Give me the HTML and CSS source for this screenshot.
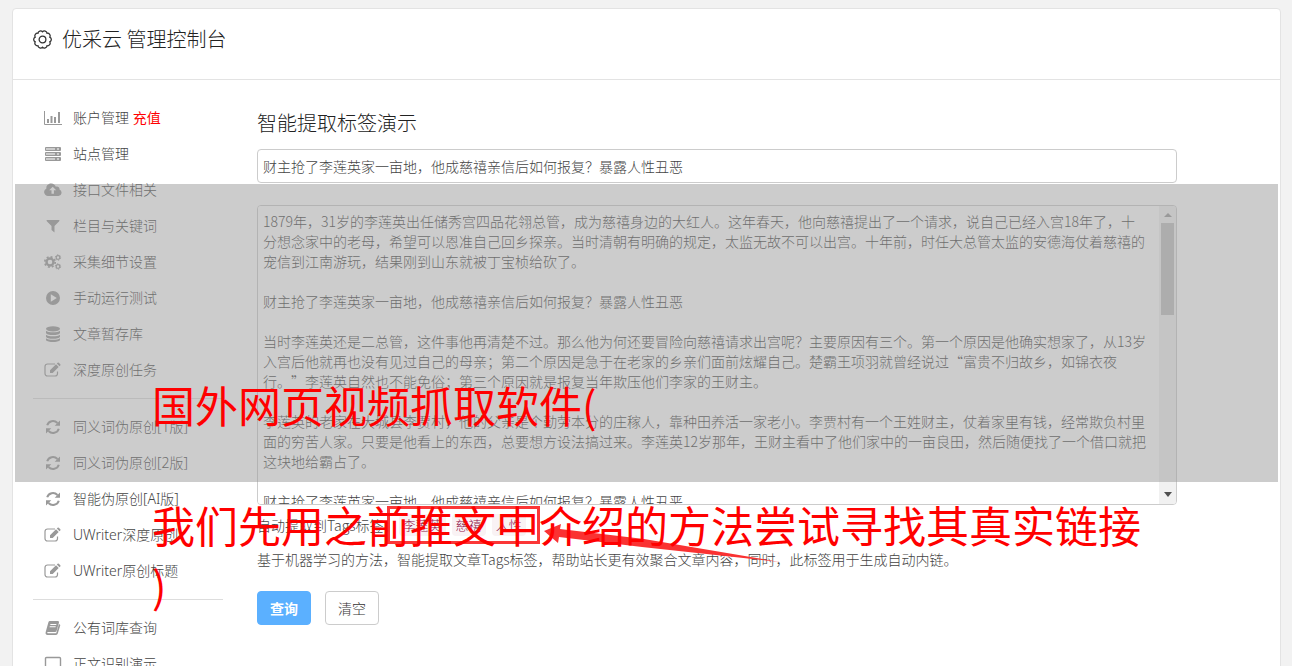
FILE: index.html
```html
<!DOCTYPE html>
<html lang="zh-CN">
<head>
<meta charset="utf-8">
<title>优采云 管理控制台</title>
<link rel="stylesheet" href="styles.css">
</head>
<body>
<svg class="defs" aria-hidden="true">
  <symbol id="i-chart" viewBox="0 0 18 16"><path d="M.5 1v13.500H18" fill="none" stroke="currentColor"/><path d="M3 9h2v4H3zM6.500 6h2v7h-2zM10 7h2v6h-2zM14 2h2v11h-2z"/></symbol>
  <symbol id="i-server" viewBox="0 0 18 16"><path fill="none" stroke="currentColor" d="M1.500 1.500h15v3h-15zM1.500 6.500h15v3h-15zM1.500 11.500h15v3h-15z"/><path opacity=".5" d="M2 2h13v2H2zM2 7h13v2H2zM2 12h13v2H2z"/><path d="M11 2h2v2h-2zM15 2h1v2h-1zM11 7h2v2h-2zM15 7h1v2h-1zM11 12h2v2h-2zM15 12h1v2h-1z"/></symbol>
  <symbol id="i-cloud" viewBox="0 0 18 16"><path fill-rule="evenodd" d="M4 14a4 4 0 0 1-1.600-7.600C2 3.500 4.500 1.500 7.200 1.500c2.300 0 4 1.300 4.700 3.200 2-.8 4 .8 3.600 2.800A3.400 3.400 0 0 1 14.500 14zM8.700 4.700 5.200 8.200h2.300v3.600h2.400V8.200h2.300z"/></symbol>
  <symbol id="i-filter" viewBox="0 0 18 16"><path d="M2.500 2h13l-.3 1.200-4.700 4.700v6.600l-3-2.400V7.900L2.800 3.200z"/></symbol>
  <symbol id="i-cogs" viewBox="0 0 18 16"><g fill="none" stroke="currentColor"><circle cx="6" cy="8" r="3.500" stroke-width="2.400"/><circle cx="6" cy="8" r="5.200" stroke-width="1.700" stroke-dasharray="2 2.080"/><circle cx="14" cy="3.500" r="1.800" stroke-width="1.200"/><circle cx="14" cy="3.500" r="2.700" stroke-dasharray="1.400 1.427"/><circle cx="14" cy="12.500" r="1.800" stroke-width="1.200"/><circle cx="14" cy="12.500" r="2.700" stroke-dasharray="1.400 1.427"/></g></symbol>
  <symbol id="i-play" viewBox="0 0 18 16"><path fill-rule="evenodd" d="M9 1a7 7 0 1 1 0 14A7 7 0 0 1 9 1zM6.800 4.300v7.400L12.800 8z"/></symbol>
  <symbol id="i-db" viewBox="0 0 18 16"><ellipse cx="9" cy="2.800" rx="7" ry="2.600"/><path d="M2 4.700c2.500 2 11.500 2 14 0v2c0 3.100-14 3.100-14 0zM2 8.700c2.500 2 11.500 2 14 0v1.800c0 3.100-14 3.100-14 0zM2 12.300c2.500 2 11.500 2 14 0v1.400c0 3.100-14 3.100-14 0z"/></symbol>
  <symbol id="i-edit" viewBox="0 0 18 16"><path d="M11 2H3.500A2.500 2.500 0 0 0 1 4.500v7A2.500 2.500 0 0 0 3.500 14h7.500a2.500 2.500 0 0 0 2.500-2.500V9.500" fill="none" stroke="currentColor" stroke-width="1.200"/><path d="m6 8.300 6-6 2.700 2.700-6 6H6zM12.800 1.500l.8-.8q.6-.5 1.200 0L16.300 2.200q.5.600 0 1.200l-.8.8z"/></symbol>
  <symbol id="i-sync" viewBox="0 0 18 16"><path d="M3.200 6.300C4.600 1.800 10.200.8 13.500 4M14.800 9.700C13.400 14.200 7.800 15.200 4.500 12" fill="none" stroke="currentColor" stroke-width="2"/><path d="M16 1.500v5.300h-5.300zM2 14.500V9.200h5.300z"/></symbol>
  <symbol id="i-book" viewBox="0 0 18 16"><path fill-rule="evenodd" d="M5.800 1h8.200q1.300.2 1 1.500l-2.400 8.200Q12.200 12 11 12H3.500q-.7.500.2 1.200h8.500l2.600-8.700q1.200-.5 1.500.7l-2.500 8.300q-.4 1.300-1.800 1.500H3.500Q1 14.700 1.700 12L4.400 2.300Q4.800 1.100 5.800 1zM6.500 4l-.3 1h6l.3-1zM5.800 6.300l-.3 1h6l.3-1z"/></symbol>
  <symbol id="i-laptop" viewBox="0 0 18 16"><path d="M1.500 2.500q0-1 1-1h13q1 0 1 1v8q0 1-1 1h-13q-1 0-1-1zM0 14h18" fill="none" stroke="currentColor" stroke-width="1.400"/></symbol>
</svg>

<div class="card">
  <header class="head">
    <svg class="gear" viewBox="0 0 18 18" aria-hidden="true"><path d="M15.940 6.740A2.500 2.500 0 0 1 15.940 11.260 2.500 2.500 0 0 1 13.290 14.910 2.500 2.500 0 0 1 9 16.300 2.500 2.500 0 0 1 4.710 14.910 2.500 2.500 0 0 1 2.060 11.260 2.500 2.500 0 0 1 2.060 6.740 2.500 2.500 0 0 1 4.710 3.090 2.500 2.500 0 0 1 9 1.700 2.500 2.500 0 0 1 13.290 3.090 2.500 2.500 0 0 1 15.940 6.740z" fill="none" stroke="currentColor" stroke-width="1.200"/><circle cx="9" cy="9" r="3.200" fill="none" stroke="currentColor" stroke-width="1.200"/></svg>
    <h1>优采云 管理控制台</h1>
  </header>
  <div class="body">
    <nav class="side">
      <div class="item"><svg><use href="#i-chart"/></svg><span><a href="#">账户管理</a> <a class="pay" href="#">充值</a></span></div>
      <a class="item" href="#"><svg><use href="#i-server"/></svg>站点管理</a>
      <a class="item" href="#"><svg><use href="#i-cloud"/></svg>接口文件相关</a>
      <a class="item" href="#"><svg><use href="#i-filter"/></svg>栏目与关键词</a>
      <a class="item" href="#"><svg><use href="#i-cogs"/></svg>采集细节设置</a>
      <a class="item" href="#"><svg><use href="#i-play"/></svg>手动运行测试</a>
      <a class="item" href="#"><svg><use href="#i-db"/></svg>文章暂存库</a>
      <a class="item" href="#"><svg><use href="#i-edit"/></svg>深度原创任务</a>
      <hr>
      <a class="item" href="#"><svg><use href="#i-sync"/></svg>同义词伪原创[1版]</a>
      <a class="item" href="#"><svg><use href="#i-sync"/></svg>同义词伪原创[2版]</a>
      <a class="item" href="#"><svg><use href="#i-sync"/></svg>智能伪原创[AI版]</a>
      <a class="item" href="#"><svg><use href="#i-edit"/></svg>UWriter深度原创</a>
      <a class="item" href="#"><svg><use href="#i-edit"/></svg>UWriter原创标题</a>
      <hr>
      <a class="item" href="#"><svg><use href="#i-book"/></svg>公有词库查询</a>
      <a class="item" href="#"><svg><use href="#i-laptop"/></svg>正文识别演示</a>
    </nav>
    <main class="main">
      <h2 id="demo">智能提取标签演示</h2>
      <input class="field" type="text" aria-labelledby="demo" value="财主抢了李莲英家一亩地，他成慈禧亲信后如何报复？暴露人性丑恶">
      <div class="article">
        <textarea aria-labelledby="demo" spellcheck="false">1879年，31岁的李莲英出任储秀宫四品花翎总管，成为慈禧身边的大红人。这年春天，他向慈禧提出了一个请求，说自己已经入宫18年了，十分想念家中的老母，希望可以恩准自己回乡探亲。当时清朝有明确的规定，太监无故不可以出宫。十年前，时任大总管太监的安德海仗着慈禧的宠信到江南游玩，结果刚到山东就被丁宝桢给砍了。

财主抢了李莲英家一亩地，他成慈禧亲信后如何报复？暴露人性丑恶

当时李莲英还是二总管，这件事他再清楚不过。那么他为何还要冒险向慈禧请求出宫呢？主要原因有三个。第一个原因是他确实想家了，从13岁入宫后他就再也没有见过自己的母亲；第二个原因是急于在老家的乡亲们面前炫耀自己。楚霸王项羽就曾经说过“富贵不归故乡，如锦衣夜行。”李莲英自然也不能免俗；第三个原因就是报复当年欺压他们李家的王财主。

李莲英的老家在大城县李贾村，他的父亲是个勤劳本分的庄稼人，靠种田养活一家老小。李贾村有一个王姓财主，仗着家里有钱，经常欺负村里面的穷苦人家。只要是他看上的东西，总要想方设法搞过来。李莲英12岁那年，王财主看中了他们家中的一亩良田，然后随便找了一个借口就把这块地给霸占了。

财主抢了李莲英家一亩地，他成慈禧亲信后如何报复？暴露人性丑恶</textarea>
        <div class="bar" aria-hidden="true"><i class="up"></i><i class="thumb"></i><i class="down"></i></div>
      </div>
      <div class="tags">自动提取到Tags标签：<div class="taglist"><code>李莲英</code><code>慈禧</code><code>人性</code>
        <svg class="arrow" viewBox="0 0 240 42" aria-hidden="true"><path d="M0 8 17 1 16 6 100 16 236 39 98 24 15 14 14 20z"/></svg>
      </div></div>
      <p class="note">基于机器学习的方法，智能提取文章Tags标签，帮助站长更有效聚合文章内容，同时，此标签用于生成自动内链。</p>
      <div class="actions"><button class="primary" type="button">查询</button><button type="button">清空</button></div>
    </main>
  </div>
  <div class="shade"></div>
</div>
<div class="caption">国外网页视频抓取软件(<br><br>我们先用之前推文中介绍的方法尝试寻找其真实链接<br>)</div>
</body>
</html>
```
FILE: styles.css
```css
* { box-sizing: border-box; }
html { height: 100%; overflow: hidden; }
body {
  margin: 0;
  height: 100%;
  padding: 8px 11px 0 12px;
  overflow: hidden;
  position: relative;
  background: #f2f2f2;
  color: #444;
  font: 300 14px/20px "Noto Sans CJK SC", "Noto Sans", sans-serif;
}
.defs { position: absolute; width: 0; height: 0; }
.card { position: relative; background: #fff; border: 1px solid #e3e3e3; border-radius: 4px; }
.head { display: flex; align-items: center; gap: 10px; height: 71px; padding: 0 20px 10px; border-bottom: 1px solid #e3e3e3; color: #333; }
.gear { width: 19px; height: 19px; }
h1, h2 { margin: 0; font-size: 20px; font-weight: 300; line-height: 28px; color: #222; }
.body { display: flex; gap: 34px; padding: 20px 103px 20px 20px; }
.side { flex: 0 0 190px; }
.item { display: flex; align-items: center; gap: 11px; height: 36px; padding-left: 11px; color: #444; font-family: "Noto Sans", "Noto Sans CJK SC", sans-serif; font-weight: 300; text-decoration: none; }
.item a { color: #444; text-decoration: none; }
.item .pay { color: #f00; font-weight: 400; }
.item svg { width: 18px; height: 16px; color: #999; fill: currentColor; }
hr { margin: 10px 0; border: 0; border-top: 1px solid #ddd; }
.main { flex: 1; min-width: 0; }
h2 { margin: 9px 0 12px; }
.field, textarea { font: inherit; color: #444; outline: 0; text-spacing-trim: space-all; }
.field { display: block; width: 100%; height: 34px; padding: 5px; border: 1px solid #ccc; border-radius: 4px; background: #fff; }
.article { display: flex; height: 300px; margin-top: 22px; border: 1px solid #ccc; border-radius: 4px; overflow: hidden; }
textarea { flex: 1; min-width: 0; padding: 5px 12px 5px 5px; border: 0; background: #fff; resize: none; overflow: hidden; }
.bar { display: flex; flex-direction: column; align-items: center; width: 17px; background: #f1f1f1; }
.up, .down { margin: 7px 0 6px; border: 4px solid transparent; border-top: 0; border-bottom: 4px solid #999; }
.thumb { width: 13px; height: 92px; background: #c1c1c1; }
.down { margin: auto 0 7px; border-top: 5px solid #505050; border-bottom: 0; }
.tags { display: flex; align-items: center; height: 40px; }
.taglist { position: relative; display: flex; gap: 6px; align-items: center; height: 38px; margin-left: -11px; padding: 0 11px 0 9px; border: 3px solid rgba(250, 20, 20, .85); }
code { padding: 2px 4px; border-radius: 4px; background: #f9f2f4; color: #901048; font: 300 13px/18px "Noto Sans CJK SC", sans-serif; }
.arrow { position: absolute; left: 154px; top: 14px; width: 240px; height: 42px; fill: #fa3232; }
.note { margin: 4px 0 22px; }
.actions { display: flex; gap: 14px; }
button { width: 54px; height: 34px; padding: 0; border: 1px solid #ccc; border-radius: 4px; background: #fff; color: #333; font: inherit; }
.primary { border-color: #5bb0ff; background: #5bb0ff; color: #fff; font-weight: 700; }
.shade { position: absolute; left: 2px; right: 2px; top: 175px; height: 298px; background: rgba(153, 153, 153, .5); }
.caption { position: absolute; left: 152px; right: 148px; top: 374px; color: #f00; font-size: 43px; font-weight: 400; line-height: 60px; }
```
